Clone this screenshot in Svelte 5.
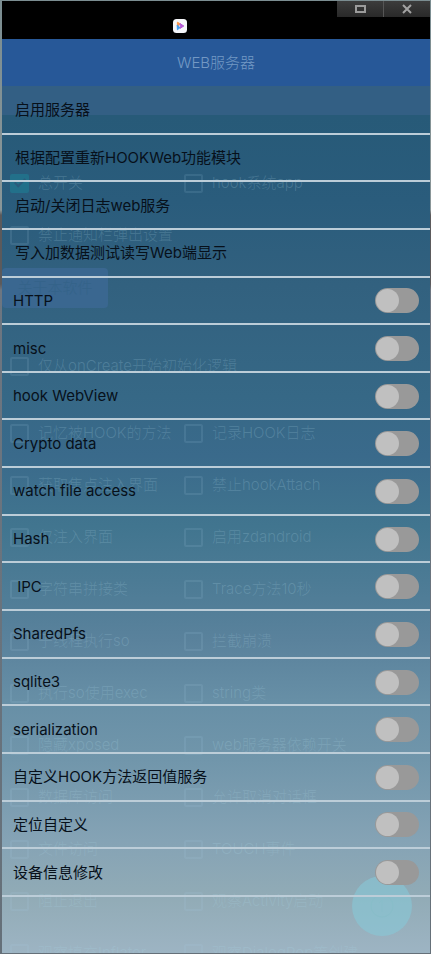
<script lang="ts">
  // Menu entries
  const actions = [
    '启用服务器',
    '根据配置重新HOOKWeb功能模块',
    '启动/关闭日志web服务',
    '写入加数据测试读写Web端显示',
  ];

  let switches = $state([
    { label: 'HTTP', on: false },
    { label: 'misc', on: false },
    { label: 'hook WebView', on: false },
    { label: 'Crypto data', on: false },
    { label: 'watch file access', on: false },
    { label: 'Hash', on: false },
    { label: ' IPC', on: false },
    { label: 'SharedPfs', on: false },
    { label: 'sqlite3', on: false },
    { label: 'serialization', on: false },
    { label: '自定义HOOK方法返回值服务', on: false },
    { label: '定位自定义', on: false },
    { label: '设备信息修改', on: false },
  ]);

  // Options of the screen that shines through behind the menu
  const options = [
    ['记忆被HOOK的方法', '记录HOOK日志'],
    ['获取焦点注入界面', '禁止hookAttach'],
    ['仅注入界面', '启用zdandroid'],
    ['字符串拼接类', 'Trace方法10秒'],
    ['子线程执行so', '拦截崩溃'],
    ['执行so使用exec', 'string类'],
    ['隐藏xposed', 'web服务器依赖开关'],
    ['数据库访问', '允许取消对话框'],
    ['文件访问', 'TOUCH事件'],
    ['阻止退出', '观察Activity启动'],
    ['观察填充Inflater', '观察DialogPop等创建'],
  ];
</script>

{#snippet option(text: string, checked = false)}
  <label class="option">
    <input type="checkbox" {checked} tabindex="-1" />
    <span>{text}</span>
  </label>
{/snippet}

<div class="window">
  <div class="status">
    <svg class="app-icon" viewBox="0 0 14 14" aria-hidden="true">
      <rect width="14" height="14" rx="3.5" fill="#f6f7fa" />
      <path d="M4.4 3.2 L7.6 5 L4.4 7.4 Z" fill="#ff9a4a" stroke="#ff9a4a" stroke-linejoin="round" />
      <path d="M7 4.6 L10.8 7 L7 9.4 Z" fill="#b45ad6" stroke="#b45ad6" stroke-linejoin="round" />
      <path d="M4.2 6 L7 8.6 L4.4 10.8 Z" fill="#3f9cf2" stroke="#3f9cf2" stroke-linejoin="round" />
      <path d="M6.2 6.3 L7.6 7 L6.2 7.8 Z" fill="#f6f7fa" />
    </svg>
    <div class="controls">
      <button aria-label="Maximize">
        <svg viewBox="0 0 12 10"><path d="M1 1h11v8h-11z M3 3v4h7v-4z" fill="#9b9b9b" fill-rule="evenodd" /></svg>
      </button>
      <button aria-label="Close">
        <svg viewBox="0 0 12 10"><path d="M2 1 L10 9 M10 1 L2 9" stroke="#a2a2a2" stroke-width="2" /></svg>
      </button>
    </div>
  </div>

  <header>WEB服务器</header>

  <main>
    <div class="behind" aria-hidden="true">
      <div class="toolbar"></div>
      <div class="pair first">
        {@render option('总开关', true)}
        {@render option('hook系统app')}
      </div>
      <div class="pair">
        {@render option('禁止通知栏弹出设置')}
      </div>
      <button class="about" tabindex="-1">关于本软件</button>
      <div class="pair create">
        {@render option('仅从onCreate开始初始化逻辑')}
      </div>
      {#each options as [left, right]}
        <div class="pair">
          {@render option(left)}
          {@render option(right)}
        </div>
      {/each}
      <div class="bubble">
        <svg viewBox="0 0 26 26" fill="none" stroke="#88bdc9">
          <circle cx="13" cy="13" r="11" />
          <path d="M13 7v12 M10 10l3-3" />
        </svg>
      </div>
    </div>

    <div class="list">
      {#each actions as action}
        <button class="row action">{action}</button>
      {/each}
      {#each switches as item}
        <label class="row">
          <span>{item.label}</span>
          <input class="switch" type="checkbox" role="switch" bind:checked={item.on} />
        </label>
      {/each}
    </div>
  </main>
</div>

<style>
  :global(body) {
    background: linear-gradient(#7b8d91 0, #8a9698 210px, #5b5a5c 215px, #5b5a5c 284px, #6d7681 290px, #657079);
  }

  .window {
    box-sizing: border-box;
    min-height: 100vh;
    padding: 1px 1px 1px 2px;
    display: flex;
    flex-direction: column;
    font-family: Inter, "Noto Sans CJK SC", sans-serif;
    font-size: 15px;
    font-weight: 300;
    line-height: 20px;
    color: #07101a;
  }

  button {
    font: inherit;
    color: inherit;
    border: 0;
    padding: 0;
  }

  .status {
    height: 38px;
    background: #000;
    display: flex;
    justify-content: flex-end;
    align-items: flex-start;
    position: relative;
  }

  .app-icon {
    position: absolute;
    left: 40%;
    top: 18px;
    width: 14px;
    height: 14px;
  }

  .controls {
    display: flex;
    gap: 1px;
    background: #555;
  }

  .controls button {
    width: 46px;
    height: 16px;
    display: flex;
    align-items: center;
    justify-content: center;
    background: linear-gradient(#3c3c3c, #292929);
  }

  .controls svg {
    width: 12px;
    height: 10px;
  }

  header {
    height: 47px;
    display: flex;
    align-items: center;
    justify-content: center;
    background: #275898;
    color: #7398c4;
  }

  main {
    flex: 1;
    display: flex;
    flex-direction: column;
    position: relative;
    background: linear-gradient(
      #275a78 30px,
      #2a5c7c 115px,
      #32617f 200px,
      #366886 310px,
      #3a6a8b 370px,
      #41758f 440px,
      #4c7b95 495px,
      #5a829c 555px,
      #678fa6 615px,
      #7196ab 675px,
      #85a3b5 755px,
      #91abb6 810px,
      #9db4c3
    );
  }

  .list {
    flex: 1;
    display: flex;
    flex-direction: column;
    position: relative;
    padding-top: 1px;
    margin-bottom: 56px;
  }

  .row {
    box-sizing: border-box;
    flex: 1 0 40px;
    display: flex;
    align-items: center;
    justify-content: space-between;
    padding: 1px 11px 0;
    border-bottom: 2px solid #bccdd8;
    font-weight: 400;
    white-space: pre;
    cursor: pointer;
  }

  .action {
    padding: 1px 13px 0;
    background: none;
  }

  .switch {
    appearance: none;
    box-sizing: border-box;
    width: 44px;
    height: 25px;
    margin: 0;
    padding: 1px;
    border-radius: 13px;
    background: #999;
    display: flex;
  }

  .switch::before {
    content: '';
    width: 23px;
    height: 23px;
    border-radius: 50%;
    background: #c0c0c0;
  }

  .switch:checked {
    justify-content: flex-end;
    background: #4a90d0;
  }

  /* dimmed screen below the menu */
  .behind {
    position: absolute;
    inset: 0;
    overflow: hidden;
    color: rgb(170 212 228 / 0.22);
  }

  .toolbar {
    height: 29px;
    background: #335f84;
  }

  .pair {
    height: 52px;
    display: grid;
    grid-template-columns: 174px 1fr;
  }

  .first {
    margin-top: 42px;
  }

  .create {
    margin: 32px 0 15px;
  }

  .option {
    display: flex;
    align-items: center;
    gap: 9px;
    padding-left: 8px;
    white-space: nowrap;
  }

  .option input {
    appearance: none;
    box-sizing: border-box;
    flex-shrink: 0;
    width: 19px;
    height: 19px;
    margin: 0;
    border: 2px solid rgb(170 212 228 / 0.13);
    border-radius: 2px;
  }

  .option input:checked {
    border-color: #22708a;
    background: #22708a;
    display: flex;
    justify-content: center;
  }

  .option input:checked::before {
    content: '';
    width: 4px;
    height: 9px;
    border: solid #2a5c7c;
    border-width: 0 2px 2px 0;
    transform: rotate(45deg);
  }

  .about {
    display: block;
    width: 106px;
    height: 40px;
    margin-top: 7px;
    border-radius: 4px;
    background: #3a6790;
    color: #346389;
  }

  .bubble {
    position: absolute;
    right: 18px;
    bottom: 17px;
    width: 60px;
    height: 60px;
    border-radius: 50%;
    background: rgb(135 200 215 / 0.6);
    display: flex;
    align-items: center;
    justify-content: center;
  }

  .bubble svg {
    width: 26px;
    height: 26px;
  }
</style>
